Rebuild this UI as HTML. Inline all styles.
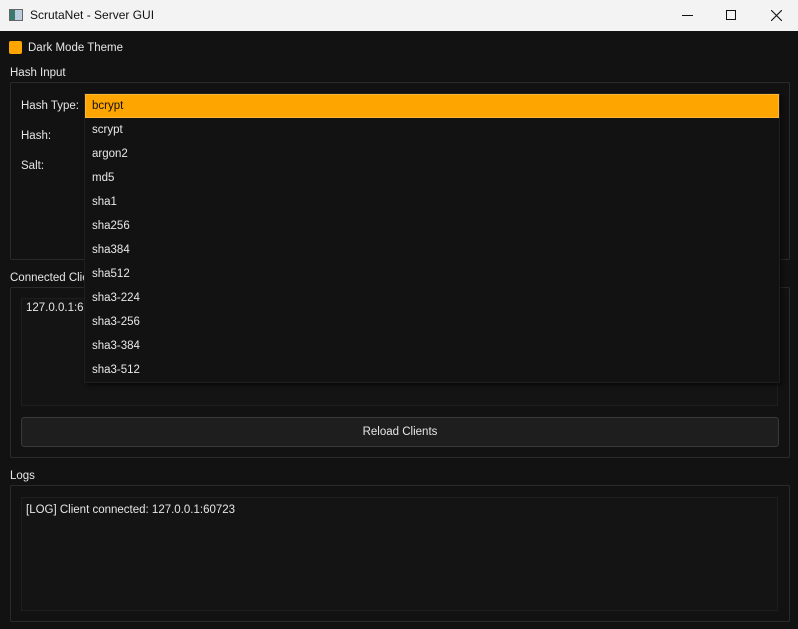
<!DOCTYPE html>
<html><head><style>
*{margin:0;padding:0;box-sizing:border-box}
body{width:798px;height:629px;background:#121212;font-family:"Liberation Sans",sans-serif;font-size:11.5px;color:#e6e6e6;position:relative;overflow:hidden}
.a{position:absolute}
.tb{left:0;top:0;width:798px;height:31px;background:#f3f3f3;color:#111}
.grp{border:1px solid #2a2a2a;border-radius:2px}
.inner{border:1px solid #1e1e1e;background:#141414}
.it{position:absolute;left:7px;font-size:11.5px;color:#e8e8e8}
</style></head><body>
<div class="a tb">
  <div class="a" style="left:9px;top:9px;width:14px;height:12px;border:1px solid #666;background:linear-gradient(90deg,#3a7a6a 40%,#bcd 40%)"></div>
  <div class="a" style="left:30px;top:8px;font-size:12px">ScrutaNet - Server GUI</div>
  <div class="a" style="left:682px;top:15px;width:11px;height:1px;background:#111"></div>
  <div class="a" style="left:726px;top:10px;width:10px;height:10px;border:1px solid #111"></div>
  <svg class="a" style="left:771px;top:10px" width="11" height="11"><path d="M0 0L11 11M11 0L0 11" stroke="#111" stroke-width="1.1"/></svg>
</div>
<div class="a" style="left:9px;top:41px;width:13px;height:13px;background:#ffa500;border-radius:2px"></div>
<div class="a" style="left:28px;top:42px">Dark Mode Theme</div>
<div class="a" style="left:10px;top:67px">Hash Input</div>
<div class="a grp" style="left:10px;top:82px;width:780px;height:178px"></div>
<div class="a" style="left:21px;top:100px">Hash Type:</div>
<div class="a" style="left:21px;top:130px">Hash:</div>
<div class="a" style="left:21px;top:160px">Salt:</div>
<div class="a" style="left:10px;top:272px">Connected Clients</div>
<div class="a grp" style="left:10px;top:287px;width:780px;height:171px"></div>
<div class="a inner" style="left:21px;top:298px;width:757px;height:108px"></div>
<div class="a" style="left:26px;top:302px">127.0.0.1:60723</div>
<div class="a" style="left:21px;top:417px;width:758px;height:30px;background:#1e1e1e;border:1px solid #3a3a3a;border-radius:3px;text-align:center;line-height:29px">Reload Clients</div>
<div class="a" style="left:10px;top:470px">Logs</div>
<div class="a grp" style="left:10px;top:485px;width:780px;height:137px"></div>
<div class="a inner" style="left:21px;top:497px;width:757px;height:114px"></div>
<div class="a" style="left:26px;top:504px">[LOG] Client connected: 127.0.0.1:60723</div>
<div class="a" style="left:84px;top:93px;width:696px;height:290px;background:#121212;border:1px solid #1f1f1f;box-shadow:2px 2px 4px rgba(0,0,0,.6)">
  <div class="a" style="left:0;top:0;width:694px;height:24px;background:#ffa500;border:1px solid #ffb733"></div>
  <div class="it" style="top:6px;color:#111">bcrypt</div>
  <div class="it" style="top:30px">scrypt</div>
  <div class="it" style="top:54px">argon2</div>
  <div class="it" style="top:78px">md5</div>
  <div class="it" style="top:102px">sha1</div>
  <div class="it" style="top:126px">sha256</div>
  <div class="it" style="top:150px">sha384</div>
  <div class="it" style="top:174px">sha512</div>
  <div class="it" style="top:198px">sha3-224</div>
  <div class="it" style="top:222px">sha3-256</div>
  <div class="it" style="top:246px">sha3-384</div>
  <div class="it" style="top:270px">sha3-512</div>
</div>
</body></html>
